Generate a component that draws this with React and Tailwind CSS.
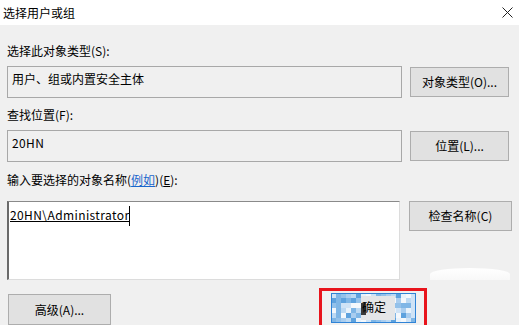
import React from "react";

const font = { fontFamily: '"Noto Sans CJK SC", "Microsoft YaHei", "Noto Sans", sans-serif' };

function WinButton({ children, className = "" }) {
  return (
    <div
      className={`flex items-center justify-center bg-[#e1e1e1] border border-[#adadad] text-[12px] text-black ${className}`}
    >
      {children}
    </div>
  );
}

function Mosaic() {
  const cells = [];
  const cols = 17;
  const rows = 6;
  const palette = ["#cfe3f6", "#a9cdef", "#e8f2fb", "#7fb6e6", "#bcd9f3", "#f4f8fc", "#93c1ea", "#5ea2de"];
  for (let r = 0; r < rows; r++) {
    for (let c = 0; c < cols; c++) {
      const idx = (r * 7 + c * 3 + ((r * c) % 5)) % palette.length;
      cells.push(
        <rect key={`${r}-${c}`} x={c * 5} y={r * 5} width="5" height="5" fill={palette[idx]} />
      );
    }
  }
  return (
    <svg width="85" height="30" viewBox="0 0 85 30" className="absolute inset-0">
      {cells}
      <rect x="30" y="3" width="34" height="24" fill="#e4e6e8" />
      <rect x="30" y="10" width="5" height="12" fill="#3a3a3a" />
      <rect x="0.5" y="0.5" width="84" height="29" fill="none" stroke="#2f83d6" strokeWidth="1" />
    </svg>
  );
}

export default function App() {
  return (
    <div className="w-[519px] h-[325px] overflow-hidden bg-[#f0f0f0] text-black" style={font}>
      {/* Title bar */}
      <div className="h-[25px] bg-white flex items-center justify-between pl-[3px] pr-[6px]">
        <span className="text-[12px] leading-none">选择用户或组</span>
        <svg width="11" height="11" viewBox="0 0 11 11">
          <path d="M0.5 0.5 L10.5 10.5 M10.5 0.5 L0.5 10.5" stroke="#222" strokeWidth="1" />
        </svg>
      </div>

      <div className="pl-[7px] pr-[7px]">
        {/* Row 1 */}
        <div className="mt-[18px] h-[16px] leading-[16px] text-[12px]">选择此对象类型(S):</div>
        <div className="mt-[7px] flex gap-[7px]">
          <div className="w-[395px] h-[32px] border border-[#a8a8a8] bg-[#f0f0f0] text-[12px] pl-[4px] pt-[4px] leading-[16px]">
            用户、组或内置安全主体
          </div>
          <WinButton className="w-[99px] h-[30px] mt-[1px] ml-[1px]">对象类型(O)...</WinButton>
        </div>

        {/* Row 2 */}
        <div className="mt-[9px] h-[16px] leading-[16px] text-[12px]">查找位置(F):</div>
        <div className="mt-[7px] flex gap-[7px]">
          <div className="w-[395px] h-[32px] border border-[#a8a8a8] bg-[#f0f0f0] text-[12px] pl-[4px] pt-[4px] leading-[16px] tracking-[0.4px]">
            20HN
          </div>
          <WinButton className="w-[99px] h-[30px] mt-[1px] ml-[1px]">位置(L)...</WinButton>
        </div>

        {/* Row 3 */}
        <div className="mt-[10px] h-[16px] leading-[16px] text-[12px]">
          输入要选择的对象名称(<span className="text-[#1a66cc] underline">例如</span>)(<span className="underline">E</span>):
        </div>
        <div className="mt-[13px] flex gap-[9px]">
          <div className="w-[393px] h-[79px] bg-white border-l-2 border-t border-l-[#6a6a6a] border-t-[#8a8a8a] border-r border-b border-r-[#dcdcdc] border-b-[#dcdcdc] pt-[4px] pl-[1px]">
            <div className="flex items-start">
              <span className="text-[12px] leading-[18px] underline tracking-[0.4px]">20HN\Administrator</span>
              <span className="w-[1px] h-[20px] bg-black"></span>
            </div>
          </div>
          <div className="flex flex-col w-[103px]">
            <WinButton className="w-[103px] h-[30px]">检查名称(C)</WinButton>
            <div className="mt-auto ml-[21px] w-[80px] h-[12px] rounded-t-[50%] bg-gradient-to-b from-white to-[#f8f8f8]"></div>
          </div>
        </div>

        {/* Bottom row */}
        <div className="mt-[8px] flex items-start">
          <WinButton className="w-[103px] h-[31px] mt-[6px] ml-[1px]">高级(A)...</WinButton>
          <div className="ml-[208px] w-[108px] h-[40px] border-[3px] border-[#e8141c] pt-[2px] pl-[9px]">
            <div className="relative w-[85px] h-[30px]">
              <Mosaic />
              <span className="absolute left-[31px] top-[6px] text-[12px] leading-[16px] text-black">确定</span>
            </div>
          </div>
        </div>
      </div>
    </div>
  );
}
